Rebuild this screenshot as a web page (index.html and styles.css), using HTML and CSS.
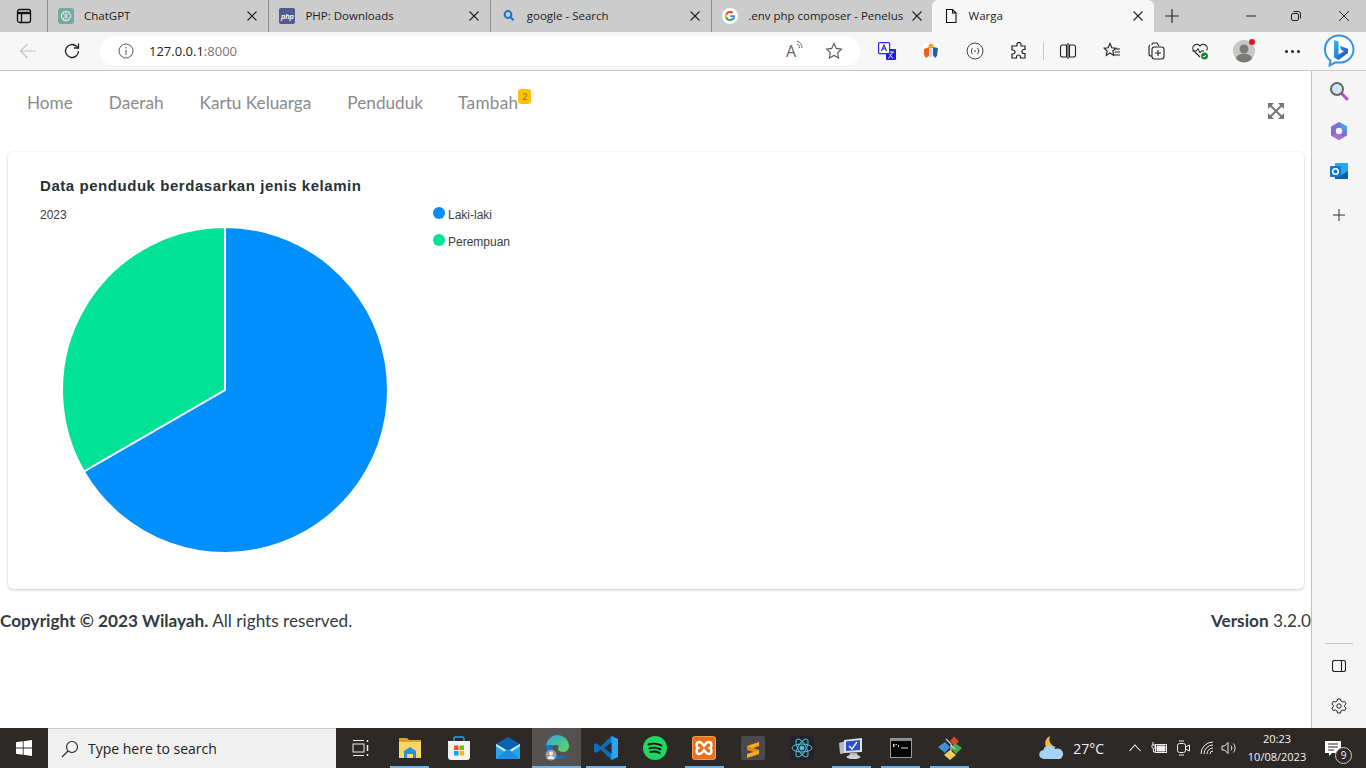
FILE: index.html
```html
<!DOCTYPE html>
<html lang="id">
<head>
  <meta charset="UTF-8" />
  <title>Warga</title>
  <link rel="stylesheet" href="styles.css">
</head>
<body>
  <div class="tabstrip">
    <div class="tab-menu">
      <svg width="16" height="16" viewBox="0 0 16 16" fill="none" stroke="#111" stroke-width="1.3"><rect x="1.5" y="1.5" width="13" height="13" rx="2"/><path d="M1.5 5h13" stroke-width="2.4"/><path d="M5.5 5v9" /></svg>
    </div>
    <div class="tab">
      <svg class="fav" width="16" height="16" viewBox="0 0 16 16"><rect width="16" height="16" rx="3" fill="#74aa9c"/><circle cx="8" cy="8" r="4.6" fill="none" stroke="#dcebe6" stroke-width="1.2"/><path d="M5 5.5l6 5M11 5.5l-6 5M8 3.5v9" stroke="#dcebe6" stroke-width=".9"/></svg>
      <span class="tab-title">ChatGPT</span>
      <svg class="tab-x" width="10" height="10" viewBox="0 0 10 10" stroke="#222" stroke-width="1.1"><path d="M.5 .5l9 9M9.500 .5l-9 9"/></svg>
    </div>
    <div class="tab">
      <svg class="fav" width="16" height="16" viewBox="0 0 16 16"><rect width="16" height="16" rx="2" fill="#4f5b93"/></svg>
      <span class="fav-php">php</span>
      <span class="tab-title">PHP: Downloads</span>
      <svg class="tab-x" width="10" height="10" viewBox="0 0 10 10" stroke="#222" stroke-width="1.1"><path d="M.5 .5l9 9M9.500 .5l-9 9"/></svg>
    </div>
    <div class="tab">
      <svg class="fav" width="16" height="16" viewBox="0 0 16 16" fill="none" stroke="#1a73c8" stroke-width="2"><circle cx="7" cy="6.5" r="3.4"/><path d="M9.6 9.2l3 3"/></svg>
      <span class="tab-title">google - Search</span>
      <svg class="tab-x" width="10" height="10" viewBox="0 0 10 10" stroke="#222" stroke-width="1.1"><path d="M.5 .5l9 9M9.500 .5l-9 9"/></svg>
    </div>
    <div class="tab">
      <svg class="fav" width="16" height="16" viewBox="0 0 16 16"><circle cx="8" cy="8" r="8" fill="#fff"/><path d="M12.9 8.2c0-.4 0-.7-.1-1H8v1.9h2.8c-.1.7-.5 1.200-1 1.600v1.300h1.600c1-.9 1.500-2.200 1.500-3.800z" fill="#4285f4"/><path d="M8 13c1.300 0 2.500-.4 3.400-1.200l-1.600-1.300c-.5.3-1.100.5-1.800.5-1.300 0-2.400-.9-2.800-2.100H3.500v1.300C4.300 11.900 6 13 8 13z" fill="#34a853"/><path d="M5.200 8.900c-.2-.6-.2-1.200 0-1.800V5.800H3.500c-.7 1.400-.7 3 0 4.400z" fill="#fbbc05"/><path d="M8 5c.7 0 1.400.3 1.900.8l1.500-1.500C10.500 3.500 9.300 3 8 3 6 3 4.300 4.100 3.500 5.800l1.700 1.300C5.600 5.900 6.700 5 8 5z" fill="#ea4335"/></svg>
      <span class="tab-title">.env php composer - Penelus</span>
      <svg class="tab-x" width="10" height="10" viewBox="0 0 10 10" stroke="#222" stroke-width="1.1"><path d="M.5 .5l9 9M9.500 .5l-9 9"/></svg>
    </div>
    <div class="tab active">
      <svg class="fav" width="16" height="16" viewBox="0 0 16 16" fill="none" stroke="#111" stroke-width="1.1"><path d="M3.500 1.500h6l3.500 3.500v9.500h-9.500zM9.500 1.500v3.500h3.500"/></svg>
      <span class="tab-title">Warga</span>
      <svg class="tab-x" width="10" height="10" viewBox="0 0 10 10" stroke="#222" stroke-width="1.1"><path d="M.5 .5l9 9M9.500 .5l-9 9"/></svg>
    </div>
    <svg class="new-tab" width="16" height="16" viewBox="0 0 16 16" stroke="#222" stroke-width="1.1"><path d="M8 1v14M1 8h14"/></svg>
    <div class="win-btns">
      <svg width="12" height="12" viewBox="0 0 12 12" stroke="#222" fill="none"><path d="M1 6h10"/></svg>
      <svg width="12" height="12" viewBox="0 0 12 12" stroke="#222" fill="none"><rect x="1.500" y="3.500" width="7" height="7" rx="1.500"/><path d="M3.500 1.500h5a2 2 0 0 1 2 2v5"/></svg>
      <svg class="win-close" width="12" height="12" viewBox="0 0 12 12" stroke="#222" fill="none"><path d="M1 1l10 10M11 1L1 11"/></svg>
    </div>
  </div>

  <div class="toolbar">
    <svg class="nav-ic" width="18" height="18" viewBox="0 0 18 18" fill="none" stroke="#c4c4c4" stroke-width="1.200"><path d="M17 9H1.500M8.500 2L1.500 9l7 7"/></svg>
    <svg class="nav-ic" width="18" height="18" viewBox="0 0 18 18" fill="none" stroke="#222" stroke-width="1.300"><path d="M15.500 9a6.500 6.500 0 1 1-2-4.700L15.500 6"/><path d="M15.500 1.500V6H11"/></svg>
    <div class="address">
      <svg width="16" height="16" viewBox="0 0 16 16" fill="none" stroke="#555"><circle cx="8" cy="8" r="7"/><path d="M8 7v5M8 4v1.500"/></svg>
      <span class="url">127.0.0.1<span class="port">:8000</span></span>
      <span class="read-aloud">A<svg width="8" height="11" viewBox="0 0 8 11" fill="none" stroke="#666"><path d="M1 1c3 1 5 3 5 7M1 4c1.500.5 2.500 2 2.500 4"/></svg></span>
      <svg width="18" height="18" viewBox="0 0 18 18" fill="none" stroke="#555" stroke-width="1.100"><path d="M9 1.500l2.300 4.900 5.200.7-3.800 3.600.9 5.300L9 13.400 4.400 16l.9-5.300L1.500 7.100l5.200-.7z"/></svg>
    </div>
    <div class="tool"><svg width="18" height="18" viewBox="0 0 18 18"><rect x="8" y="7" width="10" height="11" rx="1" fill="#2020d0"/><path d="M10 10h6M13 9v1M10.500 16.500l4-6M11 11.500l4 5" stroke="#fff" fill="none" stroke-width=".9"/><rect x=".6" y=".6" width="11" height="11" rx="1" fill="#fff" stroke="#2a2ae0" stroke-width="1.200"/><path d="M3.500 9l2.500-6 2.500 6M4.500 7h3" stroke="#2a2ae0" fill="none" stroke-width="1.200"/></svg></div>
    <div class="tool"><svg width="16" height="16" viewBox="0 0 16 16"><rect width="16" height="16" fill="#fff"/><path d="M1 6l5-2v9l-3 2-2-3z" fill="#e8641b"/><path d="M15 5l-5-1v8l2 3 2-2z" fill="#1a5fb4"/><circle cx="8" cy="3" r="2.500" fill="#f0a030"/><rect x="6.500" y="6" width="3" height="8" fill="#c9d6e8"/></svg></div>
    <div class="tool"><svg width="18" height="18" viewBox="0 0 18 18" fill="none" stroke="#444"><circle cx="9" cy="9" r="8"/><path d="M6.500 6C5 7.500 5 10.500 6.500 12M11.500 6c1.500 1.500 1.500 4.500 0 6M8 9h2" /></svg></div>
    <div class="tool"><svg width="18" height="18" viewBox="0 0 18 18" fill="none" stroke="#222" stroke-width="1.200"><path d="M7 2.500a2 2 0 0 1 4 0V4h4v3.500h-1a2 2 0 0 0 0 4h1V16h-4.500v-1a2 2 0 0 0-4 0v1H2v-4h1a2 2 0 0 0 0-4H2V4h5z"/></svg></div>
    <span class="tool-sep"></span>
    <div class="tool"><svg width="18" height="18" viewBox="0 0 18 18" fill="none" stroke="#222" stroke-width="1.100"><path d="M7.500 3h-4a2 2 0 0 0-2 2v8a2 2 0 0 0 2 2h4zM10.500 3h4a2 2 0 0 1 2 2v8a2 2 0 0 1-2 2h-4zM9 1v16"/></svg></div>
    <div class="tool"><svg width="18" height="18" viewBox="0 0 18 18" fill="none" stroke="#222" stroke-width="1.100"><path d="M7 1.500l1.800 4.200 4 .4-3 2.900.9 4.400L7 11l-3.700 2.400.9-4.400-3-2.900 4-.4zM12 7h5M11.500 10h5.500M10.500 13h6.500"/></svg></div>
    <div class="tool"><svg width="18" height="18" viewBox="0 0 18 18" fill="none" stroke="#222" stroke-width="1.100"><path d="M5 14H4a2 2 0 0 1-2-2V5a2 2 0 0 1 1-2M5 3V2.500a1.500 1.500 0 0 1 1.500-1.500H10l2 3"/><rect x="5" y="5" width="12" height="12" rx="2.500"/><path d="M11 8v6M8 11h6"/></svg></div>
    <div class="tool"><svg width="18" height="18" viewBox="0 0 18 18"><path d="M9 15L2.500 8.500a3.800 3.800 0 0 1 6.500-4.500 3.800 3.800 0 0 1 6.500 4.500" fill="none" stroke="#222" stroke-width="1.100"/><path d="M1.500 9h4l1.500-2.500L9 11l1-2h3" fill="none" stroke="#222"/><circle cx="13.500" cy="14" r="3.500" fill="#1e8a3c"/><path d="M12 14l1 1 2-2" stroke="#fff" fill="none"/></svg></div>
    <div class="tool avatar-wrap">
      <svg width="24" height="24" viewBox="0 0 24 24"><circle cx="12" cy="12" r="11" fill="#c9c7c5"/><circle cx="12" cy="10" r="4.500" fill="#7d7b79"/><path d="M4 20a8 5.500 0 0 1 16 0 11 11 0 0 1-16 0z" fill="#7d7b79"/><circle cx="20" cy="3" r="3" fill="#e81123"/></svg>
    </div>
    <div class="tool dots-tool"><span class="dots"><i></i><i></i><i></i></span></div>
    <svg class="bing" width="32" height="34" viewBox="0 0 32 34"><defs><linearGradient id="bingB" x1="0" y1="0" x2="1" y2="1"><stop offset="0" stop-color="#35c1f1"/><stop offset="1" stop-color="#1b3fc4"/></linearGradient></defs><path d="M16 1.500C8 1.500 2 7.500 2 15.500c0 5 2 8.500 5.500 11l-.8 5 5.800-3.200c1 .2 2.300.3 3.500.3 8 0 14.500-5.500 14.500-13.100S24 1.500 16 1.500z" fill="#fff" stroke="#2f93ea" stroke-width="2"/><path d="M11 6l4.500 1.500v13l5.500-3.200-2.700-1.300-1.600-4.200 8.300 2.900v4.200L15.500 26 11 23.500z" fill="url(#bingB)"/></svg>
  </div>

  <div class="main">
    <div class="page">
      <nav class="topnav">
        <a href="#">Home</a>
        <a href="#">Daerah</a>
        <a href="#">Kartu Keluarga</a>
        <a href="#">Penduduk</a>
        <a href="#" class="has-badge">Tambah<span class="badge">2</span></a>
        <svg class="expand" width="16" height="16" viewBox="0 0 16 16"><path d="M0 0h6L4 2l0 0-2 2-2 2zM16 0v6l-2-2-2-2-2-2zM0 16v-6l2 2 2 2 2 2zM16 16h-6l2-2 2-2 2-2z" fill="#777"/><path d="M2.500 2.500l11 11M13.500 2.500l-11 11" stroke="#777" stroke-width="2"/></svg>
      </nav>

      <section class="card">
        <h3 class="chart-title">Data penduduk berdasarkan jenis kelamin</h3>
        <div class="chart-row">
          <div>
            <div class="chart-sub">2023</div>
            <svg class="pie" width="328" height="328" viewBox="0 0 328 328">
              <path d="M164 164V1A163 163 0 1 1 22.840 245.500z" fill="#008ffb" stroke="#fff" stroke-width="2"/>
              <path d="M164 164L22.840 245.500A163 163 0 0 1 164 1z" fill="#00e396" stroke="#fff" stroke-width="2"/>
            </svg>
          </div>
          <ul class="legend">
            <li><i class="dot blue"></i>Laki-laki</li>
            <li><i class="dot green"></i>Perempuan</li>
          </ul>
        </div>
      </section>

      <footer class="foot">
        <span><b>Copyright © 2023 Wilayah.</b> All rights reserved.</span>
        <span><b>Version</b> 3.2.0</span>
      </footer>
    </div>

    <aside class="sidebar">
      <svg class="side-search" width="20" height="20" viewBox="0 0 20 20"><path d="M12 12l6 6" stroke="#c940d8" stroke-width="3" stroke-linecap="round"/><circle cx="8" cy="8" r="6" fill="#cfe6f5" stroke="#666" stroke-width="2"/></svg>
      <svg width="18" height="18" viewBox="0 0 18 18"><path d="M9 0l8 4.500v9L9 18l-8-4.500v-9z" fill="#7f6fd8"/><path d="M9 0l8 4.500v5L12 7z" fill="#39a7e8"/><path d="M1 13.500l8 4.500 5-3-8-3z" fill="#b56bd0"/><circle cx="9" cy="9" r="3.200" fill="#f5f5f5"/></svg>
      <svg width="18" height="18" viewBox="0 0 18 18"><rect x="5" y="1" width="13" height="16" rx="1" fill="#28a8ea"/><path d="M5 9l6.500 4L18 9v8H5z" fill="#0a5fa8"/><rect x="0" y="4" width="11" height="11" rx="1" fill="#0f78d4"/><circle cx="5.500" cy="9.500" r="2.800" fill="none" stroke="#fff" stroke-width="1.500"/></svg>
      <svg class="side-plus" width="14" height="14" viewBox="0 0 14 14" stroke="#333"><path d="M7 1v12M1 7h12"/></svg>
      <span class="side-sep"></span>
      <svg class="side-panel" width="14" height="12" viewBox="0 0 14 12" fill="none" stroke="#222" stroke-width="1.100"><rect x=".5" y=".5" width="13" height="11" rx="2"/><path d="M9.500 .5v11"/></svg>
      <svg class="side-gear" width="16" height="16" viewBox="0 0 16 16" fill="none" stroke="#222"><circle cx="8" cy="8" r="2.200"/><path d="M6.500 1h3l.4 2 1.700 1 2-.7 1.500 2.600-1.500 1.400v1.400l1.500 1.400-1.500 2.600-2-.7-1.700 1-.4 2h-3l-.4-2-1.700-1-2 .7L.9 10.100l1.500-1.400V7.300L.9 5.900l1.500-2.600 2 .7 1.700-1z"/></svg>
    </aside>
  </div>

  <div class="taskbar">
    <div class="start"><svg width="16" height="16" viewBox="0 0 16 16" fill="#fff"><path d="M0 2.300l6.800-1v6.300H0zM7.600 1.200L16 0v7.600H7.600zM0 8.400h6.800v6.300l-6.800-1zM7.600 8.400H16V16l-8.400-1.200z"/></svg></div>
    <div class="search">
      <svg width="18" height="18" viewBox="0 0 18 18" fill="none" stroke="#222" stroke-width="1.100"><circle cx="11" cy="7" r="5.500"/><path d="M7 11l-6 6"/></svg>
      <span>Type here to search</span>
    </div>
    <div class="task"><svg width="18" height="18" viewBox="0 0 18 18" fill="none" stroke="#eee"><path d="M1 1.500h11M1 16.500h11"/><rect x="1" y="5" width="11" height="8"/><path d="M15.500 1v2M15.500 6v6M15.500 15v2" stroke-width="1.500"/></svg></div>
    <div class="task on"><svg width="24" height="20" viewBox="0 0 24 20"><path d="M1 0h8l2 2h12v18H1z" fill="#d9a520"/><path d="M1 4h22v16H1z" fill="#fbd568"/><path d="M6 13l6-4 6 4v7h-3v-4H9v4H6z" fill="#2c8fd8"/></svg></div>
    <div class="task"><svg width="24" height="24" viewBox="0 0 24 24"><path d="M7 7V2.500a1.500 1.500 0 0 1 1.500-1.500h7A1.500 1.500 0 0 1 17 2.500V7" fill="none" stroke="#2aa0e0" stroke-width="1.500"/><path d="M1 5h22v16a3 3 0 0 1-3 3H4a3 3 0 0 1-3-3z" fill="#f3f3f3"/><rect x="7" y="9.500" width="4.500" height="4.500" fill="#f25022"/><rect x="12.500" y="9.500" width="4.500" height="4.500" fill="#7fba00"/><rect x="7" y="15" width="4.500" height="4.500" fill="#00a4ef"/><rect x="12.500" y="15" width="4.500" height="4.500" fill="#ffb900"/></svg></div>
    <div class="task"><svg width="24" height="22" viewBox="0 0 24 22"><path d="M0 7h24v15H0z" fill="#28a4ee"/><path d="M0 7L12 0l12 7-12 7z" fill="#0b62b0"/><path d="M0 7l12 7 12-7v2l-12 8L0 9z" fill="#d6f0fc"/><path d="M0 22l10-9 2 1 2-1 10 9z" fill="#1c8fdc"/></svg></div>
    <div class="task active-app"><svg width="26" height="28" viewBox="0 0 26 28"><defs><linearGradient id="edgeG" x1="0" y1="0" x2="1" y2="1"><stop offset="0" stop-color="#2ba8d8"/><stop offset="1" stop-color="#66d45a"/></linearGradient></defs><path d="M2 12C3 5 8 1 13 1c7 0 12 5 12 11 0 4-3 6-6 6-2 0-5-1-5-3 0-1 .5-2 1-2.500C11 9 7 12 5 16" fill="url(#edgeG)"/><path d="M2 12c0 7 5 13 12 13 3 0 6-1 8-3-4 1.500-10 0-12-3-2-3-2-6-1-8-3 0-8 0-9 1z" fill="#1276c4"/><circle cx="7" cy="21" r="5.500" fill="#9a9d9f"/><circle cx="7" cy="19.500" r="2" fill="#eee"/><path d="M3.500 25a3.500 3 0 0 1 7 0z" fill="#eee"/></svg></div>
    <div class="task on"><svg width="24" height="24" viewBox="0 0 24 24"><path d="M17.500 0L24 3v18l-6.500 3L6.500 13.500 2 17l-2-1.500V8.500L2 7l4.500 3.500z" fill="#0a70bd"/><path d="M17.500 0L24 3v18l-6.500 3z" fill="#2aa4ef"/><path d="M17.500 6.500v11L10 12z" fill="#2d2926"/></svg></div>
    <div class="task"><svg width="24" height="24" viewBox="0 0 24 24"><circle cx="12" cy="12" r="12" fill="#1ed760"/><path d="M5.500 8.500c4-1.200 9-1 13 1M6.500 12.300c3.500-1 7.500-.8 11 1M7.500 16c3-.8 6-.6 9 .9" fill="none" stroke="#111" stroke-width="1.900" stroke-linecap="round"/></svg></div>
    <div class="task on"><svg width="24" height="24" viewBox="0 0 24 24"><rect width="24" height="24" rx="3" fill="#e8711c" /><rect x=".5" y=".5" width="23" height="23" rx="3" fill="none" stroke="#f29a5a"/><path d="M7 6c3 0 4 3 5 4 1-1 2-4 5-4 3 0 3 5 1 6 2 1 2 6-1 6-3 0-4-3-5-4-1 1-2 4-5 4-3 0-3-5-1-6-2-1-2-6 1-6z" fill="none" stroke="#fff" stroke-width="2.400"/></svg></div>
    <div class="task"><svg width="24" height="24" viewBox="0 0 24 24"><rect width="24" height="24" rx="2" fill="#4a4a4a"/><path d="M6 10l12-4v4L6 14z" fill="#ffa726"/><path d="M6 10l12 4v4L6 14z" fill="#e68a00"/><path d="M6 18l12-4v4L6 22z" fill="#ffa726"/></svg></div>
    <div class="task"><svg width="24" height="24" viewBox="0 0 24 24" fill="none" stroke="#53c1de"><rect width="24" height="24" rx="3" fill="#20232a" stroke="none"/><ellipse cx="12" cy="12" rx="10" ry="4"/><ellipse cx="12" cy="12" rx="10" ry="4" transform="rotate(60 12 12)"/><ellipse cx="12" cy="12" rx="10" ry="4" transform="rotate(120 12 12)"/><circle cx="12" cy="12" r="2" fill="#53c1de"/></svg></div>
    <div class="task on"><svg width="24" height="21" viewBox="0 0 24 21"><path d="M0 5l6-2v12l-5 1z" fill="#b8bcc2"/><path d="M5 2l18-2v14L5 15z" fill="#dfe3ea"/><path d="M7 3.500l14-1.500v10L7 13z" fill="#2b50c8"/><path d="M10 8l3 3 5-7" stroke="#fff" fill="none" stroke-width="1.300"/><path d="M11 15h7l1 3H10z" fill="#b8bcc2"/><ellipse cx="14.500" cy="19" rx="7" ry="2" fill="#d0d3d6"/></svg></div>
    <div class="task on"><svg width="22" height="20" viewBox="0 0 22 20"><rect x=".5" y=".5" width="21" height="19" fill="#050505" stroke="#9a9a9a"/><rect x="1" y="1" width="20" height="2" fill="#8a8a8a"/><path d="M3 6h1.500v3H3zM5.500 6H7v1H5.500zM8 7h1v2H8zM11 9.500h7v1h-7z" fill="#ddd"/></svg></div>
    <div class="task on"><svg width="24" height="24" viewBox="0 0 24 24"><path d="M12 5l4-4.500 5 5-4.500 4.500z" fill="#d8452b"/><path d="M7 6l5 5-5 6-7-6z" fill="#3f8fdc"/><path d="M17 7l7 5-6 6-5-5z" fill="#4ca84c"/><path d="M12 14l6 5-6 5-6-5z" fill="#f2d04e"/><path d="M8 3l4 4 1 1v10M13 9l4 4" stroke="#cfcfcf" stroke-width="1.200" fill="none"/></svg></div>

    <div class="tray">
      <svg class="weather" width="26" height="26" viewBox="0 0 26 26"><path d="M11 1a8 8 0 0 0 6 11 8 8 0 0 1-10 0 8 8 0 0 1 4-11z" fill="#f5b82e"/><path d="M5 24a4.500 4.500 0 0 1-.5-9 6 6 0 0 1 11.500-1 5 5 0 0 1 5 10z" fill="#a9d3f2"/></svg>
      <span class="temp">27°C</span>
      <svg class="tray-ic chev" width="12" height="8" viewBox="0 0 12 8" fill="none" stroke="#eee" stroke-width="1.100"><path d="M.5 7L6 1l5.500 6"/></svg>
      <svg class="tray-ic batt" width="16" height="14" viewBox="0 0 16 14" fill="none" stroke="#eee"><rect x="4.500" y="3.500" width="11" height="8" /><path d="M6 5h8v5H6z" fill="#eee"/><path d="M2 1v3M1 4h3v2a1.500 1.500 0 0 1-3 0zM2.500 8v3h2"/></svg>
      <svg class="tray-ic cam" width="14" height="16" viewBox="0 0 14 16" fill="none" stroke="#eee"><rect x="1.500" y="3.500" width="8" height="9" rx="2"/><path d="M9.500 7l4-2v6l-4-2M3 1h5M3 15h5"/></svg>
      <svg class="tray-ic wifi" width="16" height="14" viewBox="0 0 16 14" fill="none" stroke="#eee"><path d="M1 13A12 12 0 0 1 13 1M4 13a9 9 0 0 1 9-9M7 13a6 6 0 0 1 6-6M10 13a3 3 0 0 1 3-3"/></svg>
      <svg class="tray-ic" width="16" height="14" viewBox="0 0 16 14" fill="none" stroke="#eee"><path d="M1 5h2.500L7 1.500v11L3.500 9H1zM10 4.500c1 1.500 1 3.500 0 5M12.500 2.500c2 3 2 6 0 9"/></svg>
      <div class="clock"><span>20:23</span><span>10/08/2023</span></div>
      <div class="notif">
        <svg width="16" height="15" viewBox="0 0 16 15"><path d="M0 0h16v12H7l-3 3v-3H0z" fill="#fff"/><path d="M3 3h10M3 6h10M3 9h6" stroke="#2d2926"/></svg>
        <span class="notif-count">9</span>
      </div>
    </div>
  </div>
</body>
</html>
```

FILE: styles.css
```css
html, body {
  margin: 0;
  height: 768px;
  overflow: hidden;
}
body {
  display: flex;
  flex-direction: column;
  font-family: 'Open Sans', sans-serif;
  background: #fff;
}

/* tabs */
.tabstrip {
  height: 32px;
  background: #cccccc;
  display: flex;
  align-items: center;
  flex-shrink: 0;
}
.tab-menu {
  width: 47px;
  padding-left: 16px;
  box-sizing: border-box;
  display: flex;
}
.tab {
  position: relative;
  width: 221.4px;
  height: 32px;
  box-sizing: border-box;
  display: flex;
  align-items: center;
  padding: 0 11px 0 10px;
  font-size: 11.5px;
  color: #222;
  border-left: 1px solid #8c8c8c;
  background-clip: padding-box;
}
.tab.active {
  background: #f7f7f7;
  border-left: none;
  border-radius: 6px 6px 0 0;
  margin-left: -1px;
  padding-left: 11px;
  width: 222px;
}
.fav {
  flex-shrink: 0;
}
.fav-php {
  position: absolute;
  left: 10px;
  width: 16px;
  text-align: center;
  font: italic bold 7px 'Liberation Sans', sans-serif;
  color: #fff;
}
.tab-title {
  margin-left: 10px;
  margin-top: -2px;
  flex: 1;
  white-space: nowrap;
}
.tab-x {
  flex-shrink: 0;
}
.new-tab {
  margin-left: 10px;
}
.win-btns {
  display: flex;
  margin-left: auto;
  gap: 33px;
  padding-right: 16px;
}
.win-close {
  margin-left: 3px;
}

/* toolbar */
.toolbar {
  height: 39px;
  box-sizing: border-box;
  background: #f7f7f7;
  border-bottom: 1px solid #c6c6c6;
  display: flex;
  align-items: center;
  flex-shrink: 0;
  padding-left: 19px;
}
.nav-ic {
  margin-right: 26px;
}
.address {
  width: 760px;
  height: 30px;
  margin-left: -7px;
  margin-right: 5px;
  box-sizing: border-box;
  background: #fff;
  border-radius: 15px;
  display: flex;
  align-items: center;
  padding: 0 17px 0 18px;
}
.url {
  margin-left: 15px;
  font-size: 13px;
  color: #222;
  flex: 1;
}
.port {
  color: #777;
}
.read-aloud {
  display: flex;
  align-items: flex-start;
  font-size: 16px;
  color: #666;
  margin-right: 21px;
}
.tool {
  width: 44px;
  display: flex;
  justify-content: center;
  align-items: center;
  flex-shrink: 0;
}
.tool-sep {
  width: 1px;
  height: 18px;
  background: #c8c8c8;
  margin: 0 2px;
}
.dots-tool {
  margin-left: 4px;
}
.dots {
  display: flex;
  gap: 3px;
}
.dots i {
  width: 3px;
  height: 3px;
  border-radius: 50%;
  background: #222;
}
.bing {
  margin-left: 9px;
}

/* page + edge sidebar */
.main {
  flex: 1;
  display: flex;
  min-height: 0;
}
.page {
  flex: 1;
  min-width: 0;
  border-right: 1px solid #c0c0c0;
}
.topnav {
  height: 61px;
  display: flex;
  align-items: flex-start;
  padding: 20px 27px 0;
  gap: 36px;
  font-family: Lato, sans-serif;
  font-size: 17.2px;
}
.topnav a {
  color: #8a8a8a;
  text-decoration: none;
  line-height: 24px;
  white-space: nowrap;
}
.has-badge {
  position: relative;
  margin-left: -1px;
  letter-spacing: .3px;
}
.badge {
  position: absolute;
  left: 100%;
  top: -2px;
  width: 13px;
  height: 15px;
  background: #ffc107;
  border-radius: 3px;
  font-size: 9px;
  line-height: 15px;
  text-align: center;
  color: #8a6d10;
  letter-spacing: 0;
}
.expand {
  margin-left: auto;
  margin-top: 12px;
}
.card {
  margin: 0 7px 0 8px;
  height: 437px;
  box-sizing: border-box;
  background: #fff;
  border-radius: 5px;
  box-shadow: 0 0 1px rgba(0,0,0,.15), 0 1px 3px rgba(0,0,0,.2);
  padding: 26px 32px 0;
  font-family: 'Liberation Sans', sans-serif;
}
.chart-title {
  margin: 0;
  font-size: 15px;
  line-height: 16px;
  color: #263238;
  letter-spacing: .55px;
}
.chart-row {
  display: flex;
  align-items: flex-start;
  margin-top: 14px;
}
.chart-sub {
  font-size: 12px;
  line-height: 14px;
  color: #373d3f;
}
.pie {
  display: block;
  margin: 4px 0 0 21px;
}
.legend {
  list-style: none;
  margin: 0 0 0 44px;
  padding: 0;
  font-size: 12px;
  color: #373d3f;
}
.legend li {
  display: flex;
  align-items: center;
  height: 14px;
  margin-bottom: 13px;
  white-space: nowrap;
}
.dot {
  width: 12px;
  height: 12px;
  border-radius: 50%;
  margin-right: 3px;
  margin-top: -5px;
}
.blue { background: #008ffb; }
.green { background: #00e396; }
.foot {
  display: flex;
  justify-content: space-between;
  margin-top: 20px;
  font-family: Lato, sans-serif;
  font-size: 17.2px;
  line-height: 24px;
  color: #343a40;
}
.sidebar {
  width: 54px;
  flex-shrink: 0;
  background: #f5f5f5;
  display: flex;
  flex-direction: column;
  align-items: center;
  gap: 22px;
  padding-top: 10px;
  box-sizing: border-box;
}
.side-search {
  margin-bottom: -1px;
}
.side-plus {
  margin-top: 6px;
}
.side-sep {
  width: 28px;
  height: 1px;
  background: #c0c0c0;
  margin-top: auto;
  margin-bottom: -6px;
}
.side-panel {
  margin-bottom: 4px;
}
.side-gear {
  margin-bottom: 14px;
}

/* windows taskbar */
.taskbar {
  height: 40px;
  background: #2d2926;
  display: flex;
  align-items: stretch;
  flex-shrink: 0;
  color: #f2f2f2;
}
.start {
  width: 48px;
  display: flex;
  align-items: center;
  justify-content: center;
}
.search {
  width: 288px;
  box-sizing: border-box;
  background: #f0f0f0;
  border-top: 1px solid #c8c8c8;
  display: flex;
  align-items: center;
  padding-left: 13px;
  color: #222;
  font-size: 14px;
}
.search span {
  margin-left: 9px;
}
.task {
  width: 49.1px;
  box-sizing: border-box;
  display: flex;
  align-items: center;
  justify-content: center;
  border-bottom: 2px solid transparent;
  padding-top: 2px;
}
.task.on {
  position: relative;
}
.task.on::after {
  content: "";
  position: absolute;
  left: 5px;
  right: 5px;
  bottom: -2px;
  height: 2px;
  background: #6cb2eb;
}
.active-app {
  background: #545250;
  border-bottom-color: #6cb2eb;
}
.tray {
  margin-left: auto;
  display: flex;
  align-items: center;
  font-size: 14px;
}
.temp {
  margin-left: 8px;
  margin-right: 25px;
}
.tray-ic {
  margin-right: 5px;
}
.chev {
  margin-right: 10px;
}
.batt {
  margin-right: 9px;
}
.cam {
  margin-right: 10px;
}
.clock {
  display: flex;
  flex-direction: column;
  align-items: center;
  font-size: 11px;
  line-height: 18px;
  margin-left: 2px;
  width: 66px;
}
.notif {
  position: relative;
  width: 44px;
  display: flex;
  justify-content: center;
  margin-left: 1px;
  margin-right: 11px;
}
.notif-count {
  position: absolute;
  right: 3px;
  top: 6px;
  width: 15px;
  height: 15px;
  border: 1px solid #ccc;
  border-radius: 50%;
  background: #2d2926;
  font-size: 10px;
  line-height: 15px;
  text-align: center;
}
```
